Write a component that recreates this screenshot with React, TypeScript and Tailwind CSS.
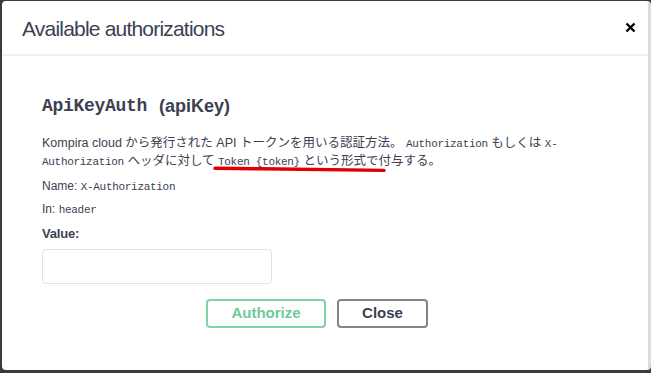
import React from "react";

const sans = "font-['Liberation_Sans','Noto_Sans_CJK_JP',sans-serif]";
const mono = "font-['Liberation_Mono','Noto_Sans_CJK_JP',monospace]";

const Code = ({ children }: { children: React.ReactNode }) => (
  <code className={`${mono} text-[11px] tracking-[-0.3px]`}>{children}</code>
);

const AuthModal = () => {
  return (
    <div className="w-[651px] h-[373px] bg-[#3a3a3a] pt-[1px] pl-[2px] pb-[3px]">
      <div className={`${sans} relative h-full bg-white rounded-[4px] border-r-[3px] border-[#dcdcdc] text-[#3b4151]`}>
        {/* Header */}
        <div className="h-[55px] flex items-center justify-between pl-[20px] pr-[8px] border-b-2 border-[#f0f0f0]">
          <h3 className="text-[21px] tracking-[-0.8px] pt-[2px]">Available authorizations</h3>
          <button className="w-[20px] h-[20px] flex items-center justify-center">
            <svg width="11" height="11" viewBox="0 0 11 11">
              <path d="M1.5 1.5 L9.5 9.5 M9.5 1.5 L1.5 9.5" stroke="#000" strokeWidth="2.4" />
            </svg>
          </button>
        </div>

        {/* Body */}
        <div className="pl-[40px] pr-[40px]">
          <h4 className="mt-[38px] h-[24px] flex items-center text-[18px] font-bold whitespace-nowrap">
            <code className={`${mono} text-[18px] tracking-[-0.3px]`}>ApiKeyAuth</code>
            <span className="ml-[12px]">(apiKey)</span>
          </h4>

          <div className="mt-[17px] text-[12.5px] leading-[17px] whitespace-nowrap">
            <div>
              Kompira cloud から発行された API トークンを用いる認証方法。 <Code>Authorization</Code> もしくは <Code>X-</Code>
            </div>
            <div>
              <Code>Authorization</Code> ヘッダに対して <Code>Token {"{token}"}</Code> という形式で付与する。
            </div>
          </div>

          <div className="mt-[7px] text-[12px] leading-[17px]">
            Name: <Code>X-Authorization</Code>
          </div>
          <div className="mt-[5px] text-[12px] leading-[17px]">
            In: <Code>header</Code>
          </div>

          <label className="block mt-[6px] text-[13px] leading-[18px] font-bold tracking-[-0.2px]">Value:</label>
          <input
            type="text"
            className="block mt-[6px] w-[230px] h-[35px] border border-[#e3e3e3] rounded-[4px] outline-none"
          />

          <div className="mt-[15px] flex justify-center gap-[11px] pr-[16px]">
            <button className="w-[120px] h-[29px] border-2 border-[#7fd4a5] rounded-[4px] text-[#6dcb97] text-[15px] font-bold">
              Authorize
            </button>
            <button className="w-[91px] h-[29px] border-2 border-[#858585] rounded-[4px] text-[#3b4151] text-[15px] font-bold">
              Close
            </button>
          </div>
        </div>

        {/* red annotation stroke */}
        <svg className="absolute left-[210px] top-[164px]" width="176" height="9" viewBox="0 0 176 9">
          <path d="M3 3.2 C 60 4, 120 4.6, 172 5.4" stroke="#e00000" strokeWidth="3.4" strokeLinecap="round" fill="none" />
        </svg>
      </div>
    </div>
  );
};

export default function App() {
  return <AuthModal />;
}
